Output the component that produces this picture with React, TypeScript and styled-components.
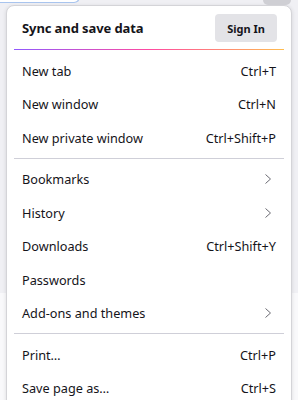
import React from "react";
import styled, { createGlobalStyle } from "styled-components";

const GlobalStyle = createGlobalStyle`
  html, body {
    margin: 0;
    padding: 0;
    background: #f0f0f4;
    font-family: "Noto Sans", "Open Sans", sans-serif;
    color: #15141a;
    overflow: hidden;
  }
`;

const Page = styled.div`
  width: 298px;
  height: 400px;
  overflow: hidden;
  background: linear-gradient(#f0f0f4 0, #f0f0f4 293px, #f9f9fb 293px);
`;

const Toolbar = styled.div`
  height: 5px;
  display: flex;
  justify-content: space-between;
  align-items: flex-end;
  overflow: hidden;
`;

const UrlField = styled.div`
  width: 80px;
  height: 12px;
  box-sizing: border-box;
  background: #fff;
  border: 1px solid #a8c4ee;
  border-top: none;
  border-left: none;
  border-radius: 0 0 6px 0;
  margin-bottom: 2px;
`;

const ToolButton = styled.div`
  width: 28px;
  height: 12px;
  margin-right: 7px;
  background: #cfcfd4;
  border-radius: 0 0 5px 5px;
`;

const Panel = styled.div`
  margin: 0 6px 0 6px;
  background: #fff;
  border: 1px solid #d4d4d8;
  border-radius: 8px;
  box-shadow: 0 1px 4px rgba(0, 0, 0, 0.12);
  padding: 0 7px;
  height: 420px;
`;

const Header = styled.div`
  display: flex;
  align-items: center;
  justify-content: space-between;
  padding: 8px 7px 7px 8px;
`;

const HeaderTitle = styled.div`
  font-size: 13px;
  font-weight: 700;
  letter-spacing: -0.1px;
`;

const SignIn = styled.div`
  height: 28px;
  padding: 0 12px;
  display: flex;
  align-items: center;
  background: #e3e3e7;
  border-radius: 4px;
  font-size: 11px;
  font-weight: 700;
`;

const GradientLine = styled.div`
  height: 1px;
  background: linear-gradient(90deg, #9059ff, #ff4aa2, #ffbd4f);
  margin-bottom: 4px;
`;

const Separator = styled.div`
  height: 1px;
  background: #cfcfd8;
  margin: 3px 0 4px;
`;

const Row = styled.div`
  height: 33.5px;
  display: flex;
  align-items: center;
  justify-content: space-between;
  padding: 0 8px;
  font-size: 12.7px;
`;

const Shortcut = styled.span`
  color: #15141a;
`;

const Chevron = () => (
  <svg width="12" height="12" viewBox="0 0 12 12" style={{ marginRight: 2 }}>
    <path d="M3.5 1.5 L8.5 6 L3.5 10.5" fill="none" stroke="#6a6a72" strokeWidth="1" />
  </svg>
);

type Item = { label: string; shortcut?: string; sub?: boolean };

const groups: Item[][] = [
  [
    { label: "New tab", shortcut: "Ctrl+T" },
    { label: "New window", shortcut: "Ctrl+N" },
    { label: "New private window", shortcut: "Ctrl+Shift+P" },
  ],
  [
    { label: "Bookmarks", sub: true },
    { label: "History", sub: true },
    { label: "Downloads", shortcut: "Ctrl+Shift+Y" },
    { label: "Passwords" },
    { label: "Add-ons and themes", sub: true },
  ],
  [
    { label: "Print…", shortcut: "Ctrl+P" },
    { label: "Save page as…", shortcut: "Ctrl+S" },
  ],
];

export default function App() {
  return (
    <Page>
      <GlobalStyle />
      <Toolbar>
        <UrlField />
        <ToolButton />
      </Toolbar>
      <Panel>
        <Header>
          <HeaderTitle>Sync and save data</HeaderTitle>
          <SignIn>Sign In</SignIn>
        </Header>
        <GradientLine />
        {groups.map((g, gi) => (
          <React.Fragment key={gi}>
            {gi > 0 && <Separator />}
            {g.map((it) => (
              <Row key={it.label}>
                <span>{it.label}</span>
                {it.shortcut && <Shortcut>{it.shortcut}</Shortcut>}
                {it.sub && <Chevron />}
              </Row>
            ))}
          </React.Fragment>
        ))}
      </Panel>
    </Page>
  );
}
